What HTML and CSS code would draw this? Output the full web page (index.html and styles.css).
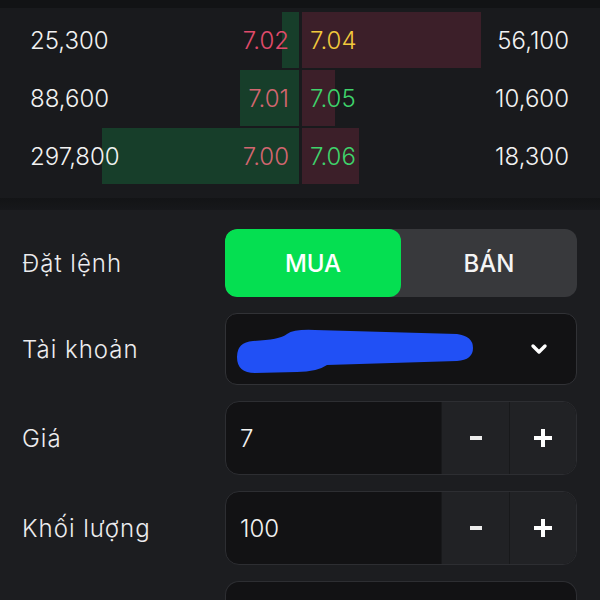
FILE: index.html
```html
<!DOCTYPE html>
<html lang="vi">
<head>
  <meta charset="UTF-8">
  <meta name="viewport" content="width=device-width, initial-scale=1.0">
  <title>Đặt lệnh</title>
  <link rel="stylesheet" href="styles.css">
</head>
<body>
  <div class="topbar"></div>

  <!-- so lenh -->
  <section class="book">
    <div class="book-row">
      <div class="side bid">
        <div class="bar bar-bid" style="width:17px"></div>
        <span class="qty">25,300</span>
        <span class="price down hot">7.02</span>
      </div>
      <div class="side ask">
        <div class="bar bar-ask" style="width:179px"></div>
        <span class="price ref">7.04</span>
        <span class="qty">56,100</span>
      </div>
    </div>
    <div class="book-row">
      <div class="side bid">
        <div class="bar bar-bid" style="width:59px"></div>
        <span class="qty">88,600</span>
        <span class="price down">7.01</span>
      </div>
      <div class="side ask">
        <div class="bar bar-ask" style="width:33px"></div>
        <span class="price up">7.05</span>
        <span class="qty">10,600</span>
      </div>
    </div>
    <div class="book-row">
      <div class="side bid">
        <div class="bar bar-bid" style="width:197px"></div>
        <span class="qty">297,800</span>
        <span class="price down">7.00</span>
      </div>
      <div class="side ask">
        <div class="bar bar-ask" style="width:57px"></div>
        <span class="price up">7.06</span>
        <span class="qty">18,300</span>
      </div>
    </div>
  </section>

  <div class="divider"></div>

  <!-- form dat lenh -->
  <section class="order">
    <div class="order-row row-side">
      <label class="label">Đặt lệnh</label>
      <div class="segment">
        <button class="seg-btn active">MUA</button>
        <button class="seg-btn">BÁN</button>
      </div>
    </div>

    <div class="order-row row-account">
      <label class="label">Tài khoản</label>
      <div class="select">
        <svg class="mask" width="240" height="46" viewBox="0 0 240 46">
          <path d="M18 13 Q44 12 52 6 Q59 1 80 2 L222 6 Q238 8 238 20 Q238 32 222 33 L92 37 Q82 44 62 44 L20 45 Q2 45 2 29 Q2 14 18 13 Z" fill="#2150f5"/>
        </svg>
        <svg class="chevron" width="18" height="12" viewBox="0 0 18 12">
          <path d="M3 3 L9 9 L15 3" fill="none" stroke="#fff" stroke-width="3.4" stroke-linecap="round" stroke-linejoin="round"/>
        </svg>
      </div>
    </div>

    <div class="order-row row-num">
      <label class="label">Giá</label>
      <div class="stepper">
        <span class="value">7</span>
        <button class="step">
          <svg width="14" height="14" viewBox="0 0 14 14"><rect x="1" y="5" width="12" height="4" fill="#ececec"/></svg>
        </button>
        <button class="step">
          <svg width="20" height="20" viewBox="0 0 20 20"><rect x="1" y="8" width="18" height="4" fill="#fff"/><rect x="8" y="1" width="4" height="18" fill="#fff"/></svg>
        </button>
      </div>
    </div>

    <div class="order-row row-num">
      <label class="label">Khối lượng</label>
      <div class="stepper">
        <span class="value">100</span>
        <button class="step">
          <svg width="14" height="14" viewBox="0 0 14 14"><rect x="1" y="5" width="12" height="4" fill="#ececec"/></svg>
        </button>
        <button class="step">
          <svg width="20" height="20" viewBox="0 0 20 20"><rect x="1" y="8" width="18" height="4" fill="#fff"/><rect x="8" y="1" width="4" height="18" fill="#fff"/></svg>
        </button>
      </div>
    </div>

    <div class="order-row row-last">
      <span class="label"></span>
      <div class="stepper"></div>
    </div>
  </section>
</body>
</html>
```

FILE: styles.css
```css
body {
  margin: 0;
  background-color: #1c1d20;
  font-family: Inter, "Noto Sans", sans-serif;
  font-weight: 300;
  color: #ececee;
  height: 600px;
  overflow: hidden;
}

.topbar {
  height: 8px;
  background-color: #121315;
}

/* so lenh */
.book {
  background-color: #191a1d;
  padding: 4px 0 14px;
  display: flex;
  flex-direction: column;
  gap: 2px;
}
.book-row {
  display: grid;
  grid-template-columns: 299px 298px;
  column-gap: 3px;
  height: 56px;
}
.side {
  position: relative;
  display: flex;
  align-items: center;
  justify-content: space-between;
  font-size: 24px;
}
.bid {
  padding: 0 10px 0 30px;
}
.ask {
  padding: 0 31px 0 8px;
}
.bar {
  position: absolute;
  top: 0;
  bottom: 0;
}
.bar-bid {
  right: 0;
  background-color: #173e2a;
}
.bar-ask {
  left: 0;
  background-color: #3c1f29;
}
.qty, .price {
  position: relative;
}
.qty {
  color: #f2f2f2;
}
.price.down {
  color: #d36670;
}
.price.hot {
  color: #e04b6b;
}
.price.ref {
  color: #f2c93c;
}
.price.up {
  color: #3fd36b;
}

.divider {
  height: 12px;
  background: linear-gradient(#131416, #17181b);
}

/* form */
.order {
  padding: 19px 23px 0 22px;
  display: flex;
  flex-direction: column;
  gap: 16px;
}
.order-row {
  display: grid;
  grid-template-columns: 203px 1fr;
  align-items: center;
}
.row-side { height: 68px; }
.row-account { height: 72px; }
.row-num { height: 74px; }
.row-last { height: 19px; }

.label {
  font-size: 24px;
  letter-spacing: 1px;
  color: #ececee;
}

.segment {
  display: grid;
  grid-template-columns: 1fr 1fr;
  height: 100%;
  background-color: #38393c;
  border-radius: 12px;
  overflow: hidden;
}
.seg-btn {
  border: none;
  background: none;
  color: #f4f4f4;
  font-family: inherit;
  font-size: 24px;
  font-weight: 500;
  border-radius: 12px;
}
.seg-btn.active {
  background-color: #05df51;
  color: #fff;
}

.select {
  height: 100%;
  box-sizing: border-box;
  background-color: #121214;
  border: 1px solid #313236;
  border-radius: 12px;
  display: flex;
  align-items: center;
  justify-content: space-between;
  padding: 0 28px 0 9px;
}
.mask {
  margin-top: 3px;
}

.stepper {
  height: 100%;
  box-sizing: border-box;
  background-color: #121214;
  border: 1px solid #2d2e32;
  border-radius: 14px;
  overflow: hidden;
  display: grid;
  grid-template-columns: 1fr 68px 67px;
}
.row-last .stepper {
  border-bottom: none;
  border-radius: 14px 14px 0 0;
}
.value {
  align-self: center;
  padding-left: 14px;
  font-size: 24px;
  color: #f2f2f2;
}
.step {
  border: none;
  border-left: 1px solid #18191b;
  background-color: #212225;
  display: flex;
  align-items: center;
  justify-content: center;
  padding: 0;
}
```
